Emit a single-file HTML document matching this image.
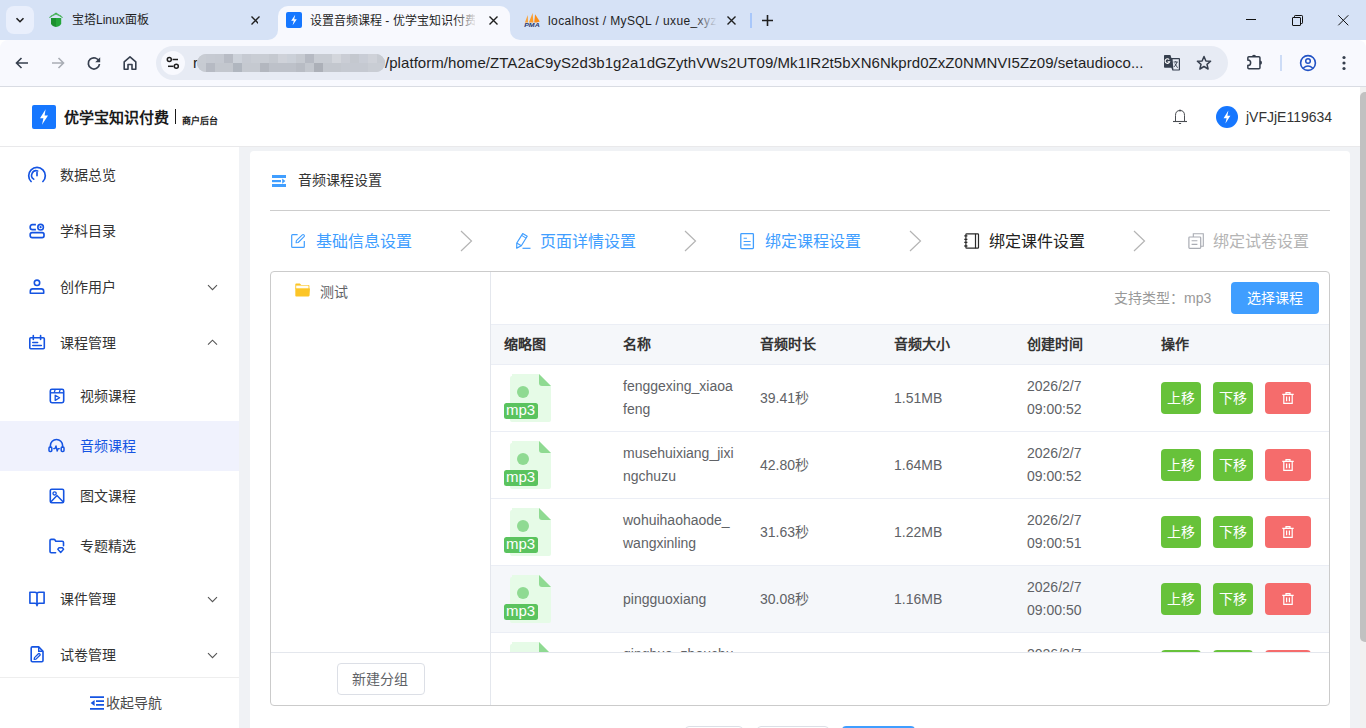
<!DOCTYPE html>
<html lang="zh-CN">
<head>
<meta charset="utf-8">
<style>
*{box-sizing:border-box}
html,body{margin:0;padding:0}
body{width:1366px;height:728px;overflow:hidden;position:relative;font-family:"Liberation Sans",sans-serif;background:#fff;color:#303133}
.a{position:absolute}
svg{position:absolute;overflow:visible}
.t{position:absolute;white-space:nowrap;line-height:1}
</style>
</head>
<body>
<!-- ============ TAB STRIP ============ -->
<div class="a" style="left:0;top:0;width:1366px;height:40px;background:#d6e2f6"></div>
<div class="a" style="left:6px;top:6px;width:28px;height:28px;border-radius:8px;background:#e9effc"></div>
<svg style="left:15px;top:15px" width="10" height="10"><path d="M1.5 3.2 L5 6.7 L8.5 3.2" stroke="#1f1f1f" stroke-width="1.6" fill="none"/></svg>
<!-- tab1 -->
<svg style="left:49px;top:13px" width="14" height="15" viewBox="0 0 14 15"><path d="M0.4 4.6 L7 0.2 L13.6 4.6" stroke="#3fae52" stroke-width="1.1" fill="none"/><path d="M1.8 2.9 L7 1.4 L12.2 2.9" stroke="#56b866" stroke-width="0.9" fill="none"/><path d="M2 5 H7 V14 Q2.6 13 2 10.4 Z" fill="#1c902f"/><path d="M7 5 H12.2 V10.4 Q11.6 13 7 14 Z" fill="#24a63a"/></svg>
<div class="t" style="left:72px;top:14px;font-size:12px;color:#1f1f1f">宝塔Linux面板</div>
<svg style="left:251px;top:16px" width="9" height="9"><path d="M0.5 0.5 L8.5 8.5 M8.5 0.5 L0.5 8.5" stroke="#1f1f1f" stroke-width="1.4"/></svg>
<!-- active tab -->
<div class="a" style="left:278px;top:6px;width:232px;height:40px;background:#f8f9fe;border-radius:10px 10px 0 0"></div>
<div class="a" style="left:268px;top:30px;width:10px;height:10px;background:#f8f9fe"></div>
<div class="a" style="left:258px;top:20px;width:20px;height:20px;background:#d6e2f6;border-radius:0 0 10px 0"></div>
<div class="a" style="left:510px;top:30px;width:10px;height:10px;background:#f8f9fe"></div>
<div class="a" style="left:510px;top:20px;width:20px;height:20px;background:#d6e2f6;border-radius:0 0 0 10px"></div>
<div class="a" style="left:286px;top:12px;width:16px;height:16px;border-radius:2px;background:#1677ff"></div>
<svg style="left:286px;top:12px" width="16" height="16"><path d="M9.2 2.8 L5.2 8.8 L7.8 8.8 L6.6 13.2 L10.8 7.2 L8.2 7.2 Z" fill="#fff"/></svg>
<div class="t" style="left:310px;top:13px;height:16px;line-height:16px;font-size:12px;color:#1f1f1f;width:165px;overflow:hidden">设置音频课程 - 优学宝知识付费</div>
<div class="a" style="left:455px;top:8px;width:22px;height:24px;background:linear-gradient(90deg,rgba(248,249,254,0),#f8f9fe)"></div>
<svg style="left:489px;top:16px" width="9" height="9"><path d="M0.5 0.5 L8.5 8.5 M8.5 0.5 L0.5 8.5" stroke="#1f1f1f" stroke-width="1.4"/></svg>
<!-- tab3 -->
<svg style="left:524px;top:12px" width="17" height="16" viewBox="0 0 17 16"><path d="M0.9 10.6 L3.8 3 L4 10.6 Z" fill="#f8a23a"/><path d="M4.9 10.6 L8.6 1 L9.4 10.6 Z" fill="#fb9d2c"/><path d="M10.2 10.6 L11.1 2.3 L15.8 9.6 L12.6 10.6 Z" fill="#fa8c16"/><text x="0.2" y="15.2" font-size="5.6" font-weight="bold" font-style="italic" fill="#2b3a6e" font-family="Liberation Sans" textLength="15.5" lengthAdjust="spacingAndGlyphs">PMA</text></svg>
<div class="t" style="left:548px;top:13px;height:16px;line-height:16px;font-size:12px;letter-spacing:0.4px;color:#1f1f1f;width:170px;overflow:hidden">localhost / MySQL / uxue_xyz</div>
<div class="a" style="left:694px;top:8px;width:26px;height:24px;background:linear-gradient(90deg,rgba(214,226,246,0),#d6e2f6 90%)"></div>
<svg style="left:727px;top:16px" width="9" height="9"><path d="M0.5 0.5 L8.5 8.5 M8.5 0.5 L0.5 8.5" stroke="#1f1f1f" stroke-width="1.4"/></svg>
<div class="a" style="left:750px;top:13px;width:2px;height:15px;background:#a8c7fa"></div>
<svg style="left:762px;top:15px" width="11" height="11"><path d="M5.5 0 L5.5 11 M0 5.5 L11 5.5" stroke="#1f1f1f" stroke-width="1.6"/></svg>
<!-- window controls -->
<div class="a" style="left:1246px;top:19px;width:10px;height:1px;background:#111"></div>
<svg style="left:1292px;top:15px" width="11" height="11" viewBox="0 0 11 11"><rect x="0.5" y="2.5" width="8" height="8" rx="0.5" stroke="#111" fill="none"/><path d="M2.5 2.5 V1.2 Q2.5 0.5 3.2 0.5 H9.8 Q10.5 0.5 10.5 1.2 V7.8 Q10.5 8.5 9.8 8.5 H8.5" stroke="#111" fill="none"/></svg>
<svg style="left:1338px;top:15px" width="11" height="11" viewBox="0 0 11 11"><path d="M0.3 0.3 L10.3 10.3 M10.3 0.3 L0.3 10.3" stroke="#111" stroke-width="1"/></svg>

<!-- ============ TOOLBAR ============ -->
<div class="a" style="left:0;top:40px;width:1366px;height:46px;background:#f8f9fe;border-radius:8px 8px 0 0"></div>
<div class="a" style="left:0;top:86px;width:1366px;height:1px;background:#d9dce3"></div>
<svg style="left:14px;top:55px" width="16" height="16" viewBox="0 0 16 16"><path d="M14 8 H2.5 M7.5 3 L2.5 8 L7.5 13" stroke="#363f4e" stroke-width="1.6" fill="none"/></svg>
<svg style="left:50px;top:55px" width="16" height="16" viewBox="0 0 16 16"><path d="M2 8 H13.5 M8.5 3 L13.5 8 L8.5 13" stroke="#a9adb5" stroke-width="1.6" fill="none"/></svg>
<svg style="left:86px;top:55px" width="16" height="16" viewBox="0 0 16 16"><path d="M13.2 6.5 A5.6 5.6 0 1 0 13.5 9" stroke="#363f4e" stroke-width="1.7" fill="none"/><path d="M14.2 2.2 V7.2 H9.2 Z" fill="#363f4e"/></svg>
<svg style="left:122px;top:55px" width="16" height="16" viewBox="0 0 16 16"><path d="M2.2 14.2 V6.8 L8 1.8 L13.8 6.8 V14.2 H10 V9.5 H6 V14.2 Z" stroke="#363f4e" stroke-width="1.6" fill="none" stroke-linejoin="round"/></svg>
<!-- omnibox -->
<div class="a" style="left:156px;top:46px;width:1072px;height:34px;border-radius:17px;background:#e7ebf4"></div>
<div class="a" style="left:161px;top:51px;width:24px;height:24px;border-radius:12px;background:#f8f9fe"></div>
<svg style="left:165px;top:55px" width="16" height="16" viewBox="0 0 16 16"><circle cx="4.3" cy="4.5" r="2" stroke="#1f1f1f" stroke-width="1.5" fill="none"/><path d="M7.5 4.5 H13" stroke="#1f1f1f" stroke-width="1.5"/><circle cx="11.3" cy="11.3" r="2" stroke="#1f1f1f" stroke-width="1.5" fill="none"/><path d="M3 11.3 H8.5" stroke="#1f1f1f" stroke-width="1.5"/></svg>
<div class="t" style="left:193px;top:55px;font-size:15px;color:#1f1f1f;width:5px;overflow:hidden">r</div>
<div class="a" style="left:197px;top:54px;width:188px;height:18px;border-radius:9px;overflow:hidden;background:#c6cad2">
 <div class="a" style="left:0px;top:0;width:9px;height:9px;background:#c8ccd3"></div>
 <div class="a" style="left:0px;top:9px;width:9px;height:9px;background:#c7cbd2"></div>
 <div class="a" style="left:9px;top:0;width:9px;height:9px;background:#c6cad2"></div>
 <div class="a" style="left:9px;top:9px;width:9px;height:9px;background:#b6bac3"></div>
 <div class="a" style="left:18px;top:0;width:9px;height:9px;background:#c5c9d1"></div>
 <div class="a" style="left:18px;top:9px;width:9px;height:9px;background:#c3c7ce"></div>
 <div class="a" style="left:27px;top:0;width:9px;height:9px;background:#b8bcc5"></div>
 <div class="a" style="left:27px;top:9px;width:9px;height:9px;background:#c3c7ce"></div>
 <div class="a" style="left:36px;top:0;width:9px;height:9px;background:#cdd2da"></div>
 <div class="a" style="left:36px;top:9px;width:9px;height:9px;background:#b0b6bf"></div>
 <div class="a" style="left:45px;top:0;width:9px;height:9px;background:#c6cad2"></div>
 <div class="a" style="left:45px;top:9px;width:9px;height:9px;background:#c5c9d0"></div>
 <div class="a" style="left:54px;top:0;width:9px;height:9px;background:#c9cdd4"></div>
 <div class="a" style="left:54px;top:9px;width:9px;height:9px;background:#c5c9d0"></div>
 <div class="a" style="left:63px;top:0;width:9px;height:9px;background:#c9cdd4"></div>
 <div class="a" style="left:63px;top:9px;width:9px;height:9px;background:#b3b7bf"></div>
 <div class="a" style="left:72px;top:0;width:9px;height:9px;background:#c5c9d0"></div>
 <div class="a" style="left:72px;top:9px;width:9px;height:9px;background:#bdc1c9"></div>
 <div class="a" style="left:81px;top:0;width:9px;height:9px;background:#cfd2d9"></div>
 <div class="a" style="left:81px;top:9px;width:9px;height:9px;background:#bdc1c9"></div>
 <div class="a" style="left:90px;top:0;width:9px;height:9px;background:#cbd0d8"></div>
 <div class="a" style="left:90px;top:9px;width:9px;height:9px;background:#bdc1c9"></div>
 <div class="a" style="left:99px;top:0;width:9px;height:9px;background:#c6cad1"></div>
 <div class="a" style="left:99px;top:9px;width:9px;height:9px;background:#b8bcc4"></div>
 <div class="a" style="left:108px;top:0;width:9px;height:9px;background:#b6bac3"></div>
 <div class="a" style="left:108px;top:9px;width:9px;height:9px;background:#c3c7ce"></div>
 <div class="a" style="left:117px;top:0;width:9px;height:9px;background:#c8ccd3"></div>
 <div class="a" style="left:117px;top:9px;width:9px;height:9px;background:#acb0b8"></div>
 <div class="a" style="left:126px;top:0;width:9px;height:9px;background:#c8ccd3"></div>
 <div class="a" style="left:126px;top:9px;width:9px;height:9px;background:#c3c7ce"></div>
 <div class="a" style="left:135px;top:0;width:9px;height:9px;background:#d3d6dc"></div>
 <div class="a" style="left:135px;top:9px;width:9px;height:9px;background:#c3c7ce"></div>
 <div class="a" style="left:144px;top:0;width:9px;height:9px;background:#cacdd5"></div>
 <div class="a" style="left:144px;top:9px;width:9px;height:9px;background:#c5c9d1"></div>
 <div class="a" style="left:153px;top:0;width:9px;height:9px;background:#c4c8cf"></div>
 <div class="a" style="left:153px;top:9px;width:9px;height:9px;background:#c5c9d1"></div>
 <div class="a" style="left:162px;top:0;width:9px;height:9px;background:#c9cdd6"></div>
 <div class="a" style="left:162px;top:9px;width:9px;height:9px;background:#c5c9d1"></div>
 <div class="a" style="left:171px;top:0;width:9px;height:9px;background:#cfd2d9"></div>
 <div class="a" style="left:171px;top:9px;width:9px;height:9px;background:#c9cdd4"></div>
 <div class="a" style="left:180px;top:0;width:9px;height:9px;background:#c7cbd2"></div>
 <div class="a" style="left:180px;top:9px;width:9px;height:9px;background:#c9cdd4"></div>
</div>
<div class="t" style="left:385px;top:55px;font-size:15px;letter-spacing:0.055px;color:#1f1f1f">/platform/home/ZTA2aC9yS2d3b1g2a1dGZythVWs2UT09/Mk1IR2t5bXN6Nkprd0ZxZ0NMNVI5Zz09/setaudioco...</div>
<!-- translate icon -->
<svg style="left:1163px;top:54px" width="18" height="18" viewBox="0 0 18 18"><path d="M1.8 1 H7.4 L8.4 4.1 H16.2 Q17 4.1 17 4.9 V15.8 Q17 16.6 16.2 16.6 H9.4 L8.4 13.8 H1.8 Q1 13.8 1 13 V1.8 Q1 1 1.8 1 Z" fill="#363f4e"/><path d="M9.6 5.3 H15.8 V15.4 H10.4 Z" fill="#e7ebf4"/><path d="M6.2 5.6 A2.3 2.3 0 1 0 6.6 7.8 H4.6" stroke="#fff" stroke-width="1.1" fill="none"/><path d="M10.6 8 H14.8 M12.6 7.2 V8 M14 8 Q13 11.5 10.8 13 M11.8 9.6 L14.6 13.8" stroke="#363f4e" stroke-width="0.9" fill="none"/></svg>
<svg style="left:1196px;top:55px" width="16" height="16" viewBox="0 0 16 16"><path d="M8 1.5 L9.9 6 L14.6 6.3 L11 9.4 L12.1 14 L8 11.5 L3.9 14 L5 9.4 L1.4 6.3 L6.1 6 Z" stroke="#363f4e" stroke-width="1.5" fill="none" stroke-linejoin="round"/></svg>
<!-- extension -->
<svg style="left:1246px;top:53px" width="18" height="18" viewBox="0 0 18 18"><path d="M2.9 3.7 H12.9 Q13.95 3.7 13.95 4.75 V14.8 Q13.95 15.85 12.9 15.85 H2.9 Q1.85 15.85 1.85 14.8 V12.6 A2.8 2.8 0 0 0 1.85 7 V4.75 Q1.85 3.7 2.9 3.7 Z" stroke="#333c4b" stroke-width="1.5" fill="none"/><path d="M5.9 3.8 A2.1 2.1 0 0 1 10.1 3.8 Z" fill="#333c4b"/><path d="M13.9 7.6 A2.1 2.1 0 0 1 13.9 11.8 Z" fill="#333c4b"/></svg>
<div class="a" style="left:1280px;top:55px;width:2px;height:16px;background:#cddcf6"></div>
<svg style="left:1299px;top:54px" width="18" height="18" viewBox="0 0 18 18"><circle cx="9" cy="9" r="7.4" stroke="#2152c4" stroke-width="1.6" fill="none"/><circle cx="9" cy="7" r="2.3" stroke="#2152c4" stroke-width="1.5" fill="none"/><path d="M4.3 14 Q9 10.2 13.7 14" stroke="#2152c4" stroke-width="1.5" fill="none"/></svg>
<svg style="left:1340px;top:55px" width="8" height="16" viewBox="0 0 8 16"><circle cx="4" cy="2.5" r="1.6" fill="#363f4e"/><circle cx="4" cy="8" r="1.6" fill="#363f4e"/><circle cx="4" cy="13.5" r="1.6" fill="#363f4e"/></svg>

<!-- ============ APP ============ -->
<div id="app" class="a" style="left:0;top:87px;width:1366px;height:641px;background:#f0f2f5"></div>
<!-- header -->
<div class="a" style="left:0;top:87px;width:1360px;height:60px;background:#fff;border-bottom:1px solid #e9e9eb"></div>
<div class="a" style="left:32px;top:105px;width:24px;height:24px;border-radius:2px;background:#1677ff"></div>
<svg style="left:32px;top:105px" width="24" height="24" viewBox="0 0 24 24"><path d="M13.6 4.2 L8 13.2 L11.4 13.2 L10 19.8 L16 10.6 L12.6 10.6 Z" fill="#fff"/></svg>
<div class="t" style="left:64px;top:110px;font-size:15px;font-weight:bold;color:#1a1a1a">优学宝知识付费</div>
<div class="a" style="left:174.5px;top:109px;width:1.6px;height:15px;background:#1a1a1a"></div>
<div class="t" style="left:182px;top:117px;font-size:9px;font-weight:bold;color:#1a1a1a">商户后台</div>
<svg style="left:1172px;top:109px" width="16" height="16" viewBox="0 0 16 16"><path d="M3.5 12.5 V6.4 Q3.5 1.5 8 1.5 Q12.5 1.5 12.5 6.4 V12.5" stroke="#4a4d52" stroke-width="1" fill="none"/><path d="M1 12.5 H15" stroke="#4a4d52" stroke-width="1.1"/><path d="M6.9 14.5 H9.1" stroke="#4a4d52" stroke-width="1"/><circle cx="8" cy="1.5" r="0.9" fill="#4a4d52"/></svg>
<div class="a" style="left:1216px;top:106px;width:22px;height:22px;border-radius:11px;background:#1677ff"></div>
<svg style="left:1216px;top:106px" width="22" height="22" viewBox="0 0 22 22"><path d="M12.4 4.6 L7.6 12.2 L10.6 12.2 L9.4 17.6 L14.4 9.8 L11.4 9.8 Z" fill="#fff"/></svg>
<div class="t" style="left:1246px;top:110px;font-size:14px;color:#333">jVFJjE119634</div>

<!-- sidebar -->
<div class="a" style="left:0;top:147px;width:239px;height:581px;background:#fff"></div>
<div class="a" style="left:0;top:421px;width:239px;height:50px;background:#f0f2fd"></div>
<div class="a" style="left:0;top:677px;width:239px;height:1px;background:#eeeeee"></div>
<div class="t" style="left:60px;top:168px;font-size:14px;color:#333">数据总览</div>
<div class="t" style="left:60px;top:224px;font-size:14px;color:#333">学科目录</div>
<div class="t" style="left:60px;top:280px;font-size:14px;color:#333">创作用户</div>
<div class="t" style="left:60px;top:336px;font-size:14px;color:#333">课程管理</div>
<div class="t" style="left:80px;top:389px;font-size:14px;color:#333">视频课程</div>
<div class="t" style="left:80px;top:439px;font-size:14px;color:#1554e2">音频课程</div>
<div class="t" style="left:80px;top:489px;font-size:14px;color:#333">图文课程</div>
<div class="t" style="left:80px;top:539px;font-size:14px;color:#333">专题精选</div>
<div class="t" style="left:60px;top:592px;font-size:14px;color:#333">课件管理</div>
<div class="t" style="left:60px;top:648px;font-size:14px;color:#333">试卷管理</div>
<div class="t" style="left:106px;top:696px;font-size:14px;color:#4a4a4a">收起导航</div>
<!-- chevrons -->
<svg style="left:207px;top:282px" width="11" height="11" viewBox="0 0 11 11"><path d="M1 3.2 L5.5 7.7 L10 3.2" stroke="#555" stroke-width="1.1" fill="none"/></svg>
<svg style="left:207px;top:337px" width="11" height="11" viewBox="0 0 11 11"><path d="M1 7.7 L5.5 3.2 L10 7.7" stroke="#555" stroke-width="1.1" fill="none"/></svg>
<svg style="left:207px;top:594px" width="11" height="11" viewBox="0 0 11 11"><path d="M1 3.2 L5.5 7.7 L10 3.2" stroke="#555" stroke-width="1.1" fill="none"/></svg>
<svg style="left:207px;top:650px" width="11" height="11" viewBox="0 0 11 11"><path d="M1 3.2 L5.5 7.7 L10 3.2" stroke="#555" stroke-width="1.1" fill="none"/></svg>
<!-- sidebar icons -->
<svg style="left:28px;top:166px" width="18" height="18" viewBox="0 0 18 18"><path d="M3.1 15.5 A8.3 8.3 0 1 1 14.9 15.5" stroke="#1554e2" stroke-width="1.7" fill="none" stroke-linecap="round"/><path d="M5.7 13.2 A4.6 4.6 0 0 1 9.7 5" stroke="#1554e2" stroke-width="1.6" fill="none" stroke-linecap="round"/><path d="M9 6.6 V9.6" stroke="#1554e2" stroke-width="1.7" stroke-linecap="round"/></svg>
<svg style="left:29px;top:223px" width="16" height="16" viewBox="0 0 16 16"><path d="M6.9 1.7 H3.4 Q1.2 1.7 1.2 3.9 V4.5 Q1.2 6.7 3.4 6.7 H6.9" stroke="#1554e2" stroke-width="1.7" fill="none"/><circle cx="11.6" cy="4.2" r="2.8" stroke="#1554e2" stroke-width="1.6" fill="none"/><circle cx="11.6" cy="4.2" r="1.1" fill="#1554e2"/><rect x="1.2" y="9.7" width="13.8" height="4.9" rx="1.9" stroke="#1554e2" stroke-width="1.7" fill="none"/></svg>
<svg style="left:29px;top:279px" width="16" height="16" viewBox="0 0 16 16"><circle cx="8" cy="3.8" r="2.7" stroke="#1554e2" stroke-width="1.6" fill="none"/><path d="M1.3 14.3 V12.2 Q1.3 9.9 3.6 9.9 H12.4 Q14.7 9.9 14.7 12.2 V14.3 Z" stroke="#1554e2" stroke-width="1.6" fill="none" stroke-linejoin="round"/></svg>
<svg style="left:28px;top:335px" width="18" height="16" viewBox="0 0 18 16"><path d="M5.3 0.6 V4.4 M12.6 0.6 V4.4" stroke="#1554e2" stroke-width="1.6" stroke-linecap="round"/><rect x="1.8" y="2.8" width="14.5" height="11" rx="1" stroke="#1554e2" stroke-width="1.6" fill="none"/><path d="M4.8 7.5 H9.6 M4.8 10.5 H13.3" stroke="#1554e2" stroke-width="1.6" stroke-linecap="round"/></svg>
<svg style="left:49px;top:388px" width="16" height="16" viewBox="0 0 16 16"><rect x="1.3" y="1.3" width="13.4" height="13.4" rx="1.6" stroke="#1554e2" stroke-width="1.6" fill="none"/><path d="M1.3 4.8 H14.7" stroke="#1554e2" stroke-width="1.4"/><path d="M6.2 1.5 L5.2 4.6 M11.2 1.5 L10.2 4.6" stroke="#1554e2" stroke-width="1.3"/><path d="M6.2 7.2 V12.4 L10.6 9.8 Z" stroke="#1554e2" stroke-width="1.3" fill="none" stroke-linejoin="round"/></svg>
<svg style="left:48px;top:437px" width="17" height="16" viewBox="0 0 17 16"><path d="M2.4 11 V8.6 A6.1 6.1 0 0 1 14.6 8.6 V11" stroke="#1554e2" stroke-width="1.6" fill="none"/><rect x="1" y="10" width="2.8" height="4.6" rx="1" stroke="#1554e2" stroke-width="1.5" fill="none"/><rect x="13.2" y="10" width="2.8" height="4.6" rx="1" stroke="#1554e2" stroke-width="1.5" fill="none"/><path d="M5.2 11.6 H7 L8 9 L9.2 14 L10.2 11.6 H11.8" stroke="#1554e2" stroke-width="1.4" fill="none" stroke-linejoin="round"/></svg>
<svg style="left:49px;top:488px" width="16" height="16" viewBox="0 0 16 16"><rect x="1.3" y="1.3" width="13.4" height="13.4" rx="1.4" stroke="#1554e2" stroke-width="1.6" fill="none"/><circle cx="5.6" cy="5.4" r="1.6" stroke="#1554e2" stroke-width="1.3" fill="none"/><path d="M2 13.8 L8 7.6 L14 13.8" stroke="#1554e2" stroke-width="1.5" fill="none"/></svg>
<svg style="left:49px;top:539px" width="16" height="16" viewBox="0 0 16 16"><path d="M6.6 13.7 H2.2 Q1 13.7 1 12.5 V1.6 Q1 0.4 2.2 0.4 H4.9 Q5.6 0.4 6 1 L6.8 2.2 H13.2 Q14.5 2.2 14.5 3.5 V6.8" stroke="#1554e2" stroke-width="1.6" fill="none" stroke-linejoin="round" stroke-linecap="round"/><path d="M8.8 10.3 L10 8.8 H13.4 L14.6 10.3 L11.7 13.5 Z" stroke="#1554e2" stroke-width="1.4" fill="none" stroke-linejoin="round"/></svg>
<svg style="left:29px;top:591px" width="16" height="16" viewBox="0 0 16 16"><path d="M8 2.4 Q7.2 1.3 5.8 1.3 H0.9 V12.2 H5.8 Q7.2 12.2 8 13.2 Q8.8 12.2 10.2 12.2 H15.1 V1.3 H10.2 Q8.8 1.3 8 2.4 Z" stroke="#1554e2" stroke-width="1.6" fill="none" stroke-linejoin="round"/><path d="M8 2.4 V15.2" stroke="#1554e2" stroke-width="1.7"/></svg>
<svg style="left:30px;top:646px" width="15" height="17" viewBox="0 0 15 17"><path d="M1.2 2.1 Q1.2 0.9 2.4 0.9 H8.7 L13 5.2 V14.6 Q13 15.8 11.8 15.8 H2.4 Q1.2 15.8 1.2 14.6 Z" stroke="#1554e2" stroke-width="1.6" fill="none" stroke-linejoin="round"/><path d="M8.7 1.1 V5.2 H12.8" stroke="#1554e2" stroke-width="1.4" fill="none"/><path d="M4.2 13.4 L4.5 11.6 L8.4 7.8 Q9 7.2 9.6 7.8 L9.9 8.1 Q10.5 8.7 9.9 9.3 L6 13.1 Z" stroke="#1554e2" stroke-width="1.3" fill="none" stroke-linejoin="round"/></svg>
<svg style="left:89px;top:696px" width="16" height="14" viewBox="0 0 16 14"><path d="M1 1.2 H15 M7 5.2 H15 M7 8.8 H15 M1 12.8 H15" stroke="#1554e2" stroke-width="1.8"/><path d="M5.6 4 L1.6 7 L5.6 10 Z" fill="#1554e2"/></svg>

<!-- ============ MAIN CARD ============ -->
<div class="a" style="left:250px;top:151px;width:1100px;height:600px;background:#fff;border-radius:4px"></div>
<svg style="left:272px;top:175px" width="14" height="12" viewBox="0 0 14 12"><rect x="0" y="0" width="14" height="3" fill="#409eff"/><rect x="0" y="5" width="9" height="2.2" fill="#409eff"/><rect x="0" y="9" width="14" height="3" fill="#409eff"/><path d="M10.2 3.4 L13.4 6.1 L10.2 8.8 Z" fill="#409eff"/></svg>
<div class="t" style="left:298px;top:173px;font-size:14px;color:#333">音频课程设置</div>
<div class="a" style="left:270px;top:210px;width:1060px;height:1px;background:#cdcdcd"></div>
<!-- steps -->
<svg style="left:291px;top:234px" width="14" height="14" viewBox="0 0 14 14"><path d="M6.6 0.7 H1.6 Q0.7 0.7 0.7 1.6 V12.4 Q0.7 13.3 1.6 13.3 H12.4 Q13.3 13.3 13.3 12.4 V7" stroke="#409eff" stroke-width="1.2" fill="none"/><path d="M5.1 8.7 L5.4 6.7 L11.3 0.9 Q12.1 0.1 12.9 0.9 L13.1 1.1 Q13.9 1.9 13.1 2.7 L7.2 8.5 Z" stroke="#409eff" stroke-width="1.1" fill="none" stroke-linejoin="round"/></svg>
<div class="t" style="left:316px;top:234px;font-size:16px;color:#409eff">基础信息设置</div>
<svg style="left:460px;top:230px" width="13" height="22" viewBox="0 0 13 22"><path d="M1 1 L11.5 11 L1 21" stroke="#b4b4b4" stroke-width="1.2" fill="none"/></svg>
<svg style="left:515px;top:233px" width="16" height="16" viewBox="0 0 16 16"><path d="M7.7 0.6 L12.2 3.3 L6.3 12.7 L1.7 15.1 L1.8 10 Z" stroke="#409eff" stroke-width="1.2" fill="none" stroke-linejoin="round"/><path d="M6.6 2.4 L11.1 5.1 M1.8 10 L6.3 12.7" stroke="#409eff" stroke-width="1.1"/><path d="M7.5 15.3 H15.5" stroke="#409eff" stroke-width="1.2"/></svg>
<div class="t" style="left:540px;top:234px;font-size:16px;color:#409eff">页面详情设置</div>
<svg style="left:684px;top:230px" width="13" height="22" viewBox="0 0 13 22"><path d="M1 1 L11.5 11 L1 21" stroke="#b4b4b4" stroke-width="1.2" fill="none"/></svg>
<svg style="left:740px;top:233px" width="14" height="16" viewBox="0 0 14 16"><rect x="0.8" y="0.6" width="12.6" height="15" rx="0.8" stroke="#409eff" stroke-width="1.3" fill="none"/><path d="M3.6 5.3 H6.9 M3.6 8.5 H10.6 M3.6 11.9 H10.6" stroke="#409eff" stroke-width="1.1"/></svg>
<div class="t" style="left:765px;top:234px;font-size:16px;color:#409eff">绑定课程设置</div>
<svg style="left:909px;top:230px" width="13" height="22" viewBox="0 0 13 22"><path d="M1 1 L11.5 11 L1 21" stroke="#b4b4b4" stroke-width="1.2" fill="none"/></svg>
<svg style="left:964px;top:233px" width="16" height="16" viewBox="0 0 16 16"><rect x="1.9" y="0.8" width="12.6" height="14.4" rx="0.8" stroke="#2b2b2b" stroke-width="1.2" fill="none"/><path d="M11.5 0.8 V15.2" stroke="#2b2b2b" stroke-width="1.2"/><path d="M0.3 2.8 H3.4 M0.3 6.4 H3.4 M0.3 9.4 H3.4 M0.3 13 H3.4" stroke="#2b2b2b" stroke-width="1.3"/></svg>
<div class="t" style="left:989px;top:234px;font-size:16px;color:#222">绑定课件设置</div>
<svg style="left:1133px;top:230px" width="13" height="22" viewBox="0 0 13 22"><path d="M1 1 L11.5 11 L1 21" stroke="#b4b4b4" stroke-width="1.2" fill="none"/></svg>
<svg style="left:1187px;top:233px" width="17" height="16" viewBox="0 0 17 16"><path d="M6.3 3.9 V0.8 H16.3 V13.2 H14" stroke="#a9acb3" stroke-width="1.1" fill="none"/><rect x="1.9" y="4" width="11.8" height="11.4" rx="0.8" stroke="#a9acb3" stroke-width="1.2" fill="none"/><path d="M4.6 7.8 H10.4 M4.6 11.4 H10.4" stroke="#a9acb3" stroke-width="1.1"/></svg>
<div class="t" style="left:1213px;top:234px;font-size:16px;color:#b4b4b4">绑定试卷设置</div>

<!-- box -->
<div class="a" style="left:270px;top:271px;width:1060px;height:435px;border:1px solid #cbcbcb;border-radius:4px"></div>
<div class="a" style="left:490px;top:272px;width:1px;height:433px;background:#e4e7ed"></div>
<div class="a" style="left:271px;top:652px;width:1058px;height:1px;background:#e4e7ed"></div>
<svg style="left:295px;top:283px" width="16" height="14" viewBox="0 0 16 14"><path d="M0.3 1.4 Q0.3 0.5 1.2 0.5 H4.8 L6.3 2 H13.6 Q14.4 2 14.4 2.8 V6 H0.3 Z" fill="#fcc526"/><rect x="1.2" y="2.6" width="12.3" height="3" fill="#fffdf4"/><path d="M0.3 5.4 H15 L14.5 12.6 Q14.4 13.4 13.6 13.4 H1.2 Q0.3 13.4 0.3 12.5 Z" fill="#fcc526"/></svg>
<div class="t" style="left:320px;top:285px;font-size:14px;color:#606266">测试</div>
<div class="a" style="left:337px;top:663px;width:88px;height:32px;border:1px solid #dcdfe6;border-radius:4px;background:#fff"></div>
<div class="t" style="left:352px;top:672px;font-size:14px;color:#606266">新建分组</div>
<!-- right toolbar -->
<div class="t" style="left:1114px;top:291px;font-size:14px;color:#999">支持类型：mp3</div>
<div class="a" style="left:1231px;top:282px;width:88px;height:32px;border-radius:4px;background:#409eff"></div>
<div class="t" style="left:1247px;top:291px;font-size:14px;color:#fff">选择课程</div>

<!-- table -->
<div class="a" style="left:491px;top:324px;width:838px;height:41px;background:#f5f7fa;border-top:1px solid #ebeef5;border-bottom:1px solid #ebeef5"></div>
<div class="t" style="left:504px;top:337px;font-size:14px;font-weight:bold;color:#333">缩略图</div>
<div class="t" style="left:623px;top:337px;font-size:14px;font-weight:bold;color:#333">名称</div>
<div class="t" style="left:760px;top:337px;font-size:14px;font-weight:bold;color:#333">音频时长</div>
<div class="t" style="left:894px;top:337px;font-size:14px;font-weight:bold;color:#333">音频大小</div>
<div class="t" style="left:1027px;top:337px;font-size:14px;font-weight:bold;color:#333">创建时间</div>
<div class="t" style="left:1161px;top:337px;font-size:14px;font-weight:bold;color:#333">操作</div>
<div class="a" style="left:491px;top:365px;width:838px;height:287px;overflow:hidden">
<div class="a" style="left:0;top:0px;width:838px;height:67px;background:#fff;border-bottom:1px solid #ebeef5"></div>
<svg style="left:12px;top:9px" width="49" height="49" viewBox="0 0 49 49"><path d="M9 2 Q7 2 7 4 V46 Q7 48 9 48 H46 Q48 48 48 46 V12 L36 0 H9 Z" fill="#e6fbe7"/><path d="M36 0 V9 Q36 12 39 12 H48 Z" fill="#8fda92"/><circle cx="20" cy="18" r="6" fill="#8fda92"/><rect x="1" y="29" width="34" height="16" rx="2.5" fill="#5ac35e"/><text x="3" y="41.2" font-size="15" fill="#fff" font-family="Liberation Sans">mp3</text></svg>
<div class="a" style="left:132px;top:10px;font-size:14px;line-height:23px;color:#606266;white-space:nowrap">fenggexing_xiaoa<br>feng</div>
<div class="a" style="left:269px;top:22px;font-size:14px;line-height:23px;color:#606266;white-space:nowrap">39.41秒</div>
<div class="a" style="left:403px;top:22px;font-size:14px;line-height:23px;color:#606266;white-space:nowrap">1.51MB</div>
<div class="a" style="left:536px;top:10px;font-size:14px;line-height:23px;color:#606266;white-space:nowrap">2026/2/7<br>09:00:52</div>
<div class="a" style="left:670px;top:17px;width:40px;height:32px;border-radius:4px;background:#67c23a"></div>
<div class="t" style="left:676px;top:26px;font-size:14px;color:#fff">上移</div>
<div class="a" style="left:722px;top:17px;width:40px;height:32px;border-radius:4px;background:#67c23a"></div>
<div class="t" style="left:728px;top:26px;font-size:14px;color:#fff">下移</div>
<div class="a" style="left:774px;top:17px;width:46px;height:32px;border-radius:4px;background:#f56c6c"></div>
<svg style="left:791px;top:27px" width="12" height="13" viewBox="0 0 12 13"><path d="M0.3 2.4 H11.7 M4 2.4 V0.6 H8 V2.4 M1.8 2.4 V11.4 H10.2 V2.4 M4.6 4.4 V9.2 M7.4 4.4 V9.2" stroke="#fff" stroke-width="1.2" fill="none"/></svg>
<div class="a" style="left:0;top:67px;width:838px;height:67px;background:#fff;border-bottom:1px solid #ebeef5"></div>
<svg style="left:12px;top:76px" width="49" height="49" viewBox="0 0 49 49"><path d="M9 2 Q7 2 7 4 V46 Q7 48 9 48 H46 Q48 48 48 46 V12 L36 0 H9 Z" fill="#e6fbe7"/><path d="M36 0 V9 Q36 12 39 12 H48 Z" fill="#8fda92"/><circle cx="20" cy="18" r="6" fill="#8fda92"/><rect x="1" y="29" width="34" height="16" rx="2.5" fill="#5ac35e"/><text x="3" y="41.2" font-size="15" fill="#fff" font-family="Liberation Sans">mp3</text></svg>
<div class="a" style="left:132px;top:77px;font-size:14px;line-height:23px;color:#606266;white-space:nowrap">musehuixiang_jixi<br>ngchuzu</div>
<div class="a" style="left:269px;top:89px;font-size:14px;line-height:23px;color:#606266;white-space:nowrap">42.80秒</div>
<div class="a" style="left:403px;top:89px;font-size:14px;line-height:23px;color:#606266;white-space:nowrap">1.64MB</div>
<div class="a" style="left:536px;top:77px;font-size:14px;line-height:23px;color:#606266;white-space:nowrap">2026/2/7<br>09:00:52</div>
<div class="a" style="left:670px;top:84px;width:40px;height:32px;border-radius:4px;background:#67c23a"></div>
<div class="t" style="left:676px;top:93px;font-size:14px;color:#fff">上移</div>
<div class="a" style="left:722px;top:84px;width:40px;height:32px;border-radius:4px;background:#67c23a"></div>
<div class="t" style="left:728px;top:93px;font-size:14px;color:#fff">下移</div>
<div class="a" style="left:774px;top:84px;width:46px;height:32px;border-radius:4px;background:#f56c6c"></div>
<svg style="left:791px;top:94px" width="12" height="13" viewBox="0 0 12 13"><path d="M0.3 2.4 H11.7 M4 2.4 V0.6 H8 V2.4 M1.8 2.4 V11.4 H10.2 V2.4 M4.6 4.4 V9.2 M7.4 4.4 V9.2" stroke="#fff" stroke-width="1.2" fill="none"/></svg>
<div class="a" style="left:0;top:134px;width:838px;height:67px;background:#fff;border-bottom:1px solid #ebeef5"></div>
<svg style="left:12px;top:143px" width="49" height="49" viewBox="0 0 49 49"><path d="M9 2 Q7 2 7 4 V46 Q7 48 9 48 H46 Q48 48 48 46 V12 L36 0 H9 Z" fill="#e6fbe7"/><path d="M36 0 V9 Q36 12 39 12 H48 Z" fill="#8fda92"/><circle cx="20" cy="18" r="6" fill="#8fda92"/><rect x="1" y="29" width="34" height="16" rx="2.5" fill="#5ac35e"/><text x="3" y="41.2" font-size="15" fill="#fff" font-family="Liberation Sans">mp3</text></svg>
<div class="a" style="left:132px;top:144px;font-size:14px;line-height:23px;color:#606266;white-space:nowrap">wohuihaohaode_<br>wangxinling</div>
<div class="a" style="left:269px;top:156px;font-size:14px;line-height:23px;color:#606266;white-space:nowrap">31.63秒</div>
<div class="a" style="left:403px;top:156px;font-size:14px;line-height:23px;color:#606266;white-space:nowrap">1.22MB</div>
<div class="a" style="left:536px;top:144px;font-size:14px;line-height:23px;color:#606266;white-space:nowrap">2026/2/7<br>09:00:51</div>
<div class="a" style="left:670px;top:151px;width:40px;height:32px;border-radius:4px;background:#67c23a"></div>
<div class="t" style="left:676px;top:160px;font-size:14px;color:#fff">上移</div>
<div class="a" style="left:722px;top:151px;width:40px;height:32px;border-radius:4px;background:#67c23a"></div>
<div class="t" style="left:728px;top:160px;font-size:14px;color:#fff">下移</div>
<div class="a" style="left:774px;top:151px;width:46px;height:32px;border-radius:4px;background:#f56c6c"></div>
<svg style="left:791px;top:161px" width="12" height="13" viewBox="0 0 12 13"><path d="M0.3 2.4 H11.7 M4 2.4 V0.6 H8 V2.4 M1.8 2.4 V11.4 H10.2 V2.4 M4.6 4.4 V9.2 M7.4 4.4 V9.2" stroke="#fff" stroke-width="1.2" fill="none"/></svg>
<div class="a" style="left:0;top:201px;width:838px;height:67px;background:#f5f7fa;border-bottom:1px solid #ebeef5"></div>
<svg style="left:12px;top:210px" width="49" height="49" viewBox="0 0 49 49"><path d="M9 2 Q7 2 7 4 V46 Q7 48 9 48 H46 Q48 48 48 46 V12 L36 0 H9 Z" fill="#e6fbe7"/><path d="M36 0 V9 Q36 12 39 12 H48 Z" fill="#8fda92"/><circle cx="20" cy="18" r="6" fill="#8fda92"/><rect x="1" y="29" width="34" height="16" rx="2.5" fill="#5ac35e"/><text x="3" y="41.2" font-size="15" fill="#fff" font-family="Liberation Sans">mp3</text></svg>
<div class="a" style="left:132px;top:223px;font-size:14px;line-height:23px;color:#606266;white-space:nowrap">pingguoxiang</div>
<div class="a" style="left:269px;top:223px;font-size:14px;line-height:23px;color:#606266;white-space:nowrap">30.08秒</div>
<div class="a" style="left:403px;top:223px;font-size:14px;line-height:23px;color:#606266;white-space:nowrap">1.16MB</div>
<div class="a" style="left:536px;top:211px;font-size:14px;line-height:23px;color:#606266;white-space:nowrap">2026/2/7<br>09:00:50</div>
<div class="a" style="left:670px;top:218px;width:40px;height:32px;border-radius:4px;background:#67c23a"></div>
<div class="t" style="left:676px;top:227px;font-size:14px;color:#fff">上移</div>
<div class="a" style="left:722px;top:218px;width:40px;height:32px;border-radius:4px;background:#67c23a"></div>
<div class="t" style="left:728px;top:227px;font-size:14px;color:#fff">下移</div>
<div class="a" style="left:774px;top:218px;width:46px;height:32px;border-radius:4px;background:#f56c6c"></div>
<svg style="left:791px;top:228px" width="12" height="13" viewBox="0 0 12 13"><path d="M0.3 2.4 H11.7 M4 2.4 V0.6 H8 V2.4 M1.8 2.4 V11.4 H10.2 V2.4 M4.6 4.4 V9.2 M7.4 4.4 V9.2" stroke="#fff" stroke-width="1.2" fill="none"/></svg>
<div class="a" style="left:0;top:268px;width:838px;height:67px;background:#fff;border-bottom:1px solid #ebeef5"></div>
<svg style="left:12px;top:277px" width="49" height="49" viewBox="0 0 49 49"><path d="M9 2 Q7 2 7 4 V46 Q7 48 9 48 H46 Q48 48 48 46 V12 L36 0 H9 Z" fill="#e6fbe7"/><path d="M36 0 V9 Q36 12 39 12 H48 Z" fill="#8fda92"/><circle cx="20" cy="18" r="6" fill="#8fda92"/><rect x="1" y="29" width="34" height="16" rx="2.5" fill="#5ac35e"/><text x="3" y="41.2" font-size="15" fill="#fff" font-family="Liberation Sans">mp3</text></svg>
<div class="a" style="left:132px;top:278px;font-size:14px;line-height:23px;color:#606266;white-space:nowrap">qinghua_zhouchu<br></div>
<div class="a" style="left:269px;top:290px;font-size:14px;line-height:23px;color:#606266;white-space:nowrap"></div>
<div class="a" style="left:403px;top:290px;font-size:14px;line-height:23px;color:#606266;white-space:nowrap"></div>
<div class="a" style="left:536px;top:278px;font-size:14px;line-height:23px;color:#606266;white-space:nowrap">2026/2/7<br>09:00:50</div>
<div class="a" style="left:670px;top:285px;width:40px;height:32px;border-radius:4px;background:#67c23a"></div>
<div class="t" style="left:676px;top:294px;font-size:14px;color:#fff">上移</div>
<div class="a" style="left:722px;top:285px;width:40px;height:32px;border-radius:4px;background:#67c23a"></div>
<div class="t" style="left:728px;top:294px;font-size:14px;color:#fff">下移</div>
<div class="a" style="left:774px;top:285px;width:46px;height:32px;border-radius:4px;background:#f56c6c"></div>
<svg style="left:791px;top:295px" width="12" height="13" viewBox="0 0 12 13"><path d="M0.3 2.4 H11.7 M4 2.4 V0.6 H8 V2.4 M1.8 2.4 V11.4 H10.2 V2.4 M4.6 4.4 V9.2 M7.4 4.4 V9.2" stroke="#fff" stroke-width="1.2" fill="none"/></svg>
</div>

<!-- bottom buttons -->
<div class="a" style="left:685px;top:726px;width:58px;height:32px;border:1px solid #dcdfe6;border-radius:4px;background:#fff"></div>
<div class="a" style="left:757px;top:726px;width:72px;height:32px;border:1px solid #dcdfe6;border-radius:4px;background:#fff"></div>
<div class="a" style="left:842px;top:726px;width:73px;height:32px;border-radius:4px;background:#409eff"></div>
<!-- scrollbar -->
<div class="a" style="left:1360px;top:87px;width:6px;height:641px;background:#f1f1f1"></div>
<div class="a" style="left:1360px;top:92px;width:10px;height:550px;border-radius:5px;background:#c1c1c1"></div>
</body>
</html>
